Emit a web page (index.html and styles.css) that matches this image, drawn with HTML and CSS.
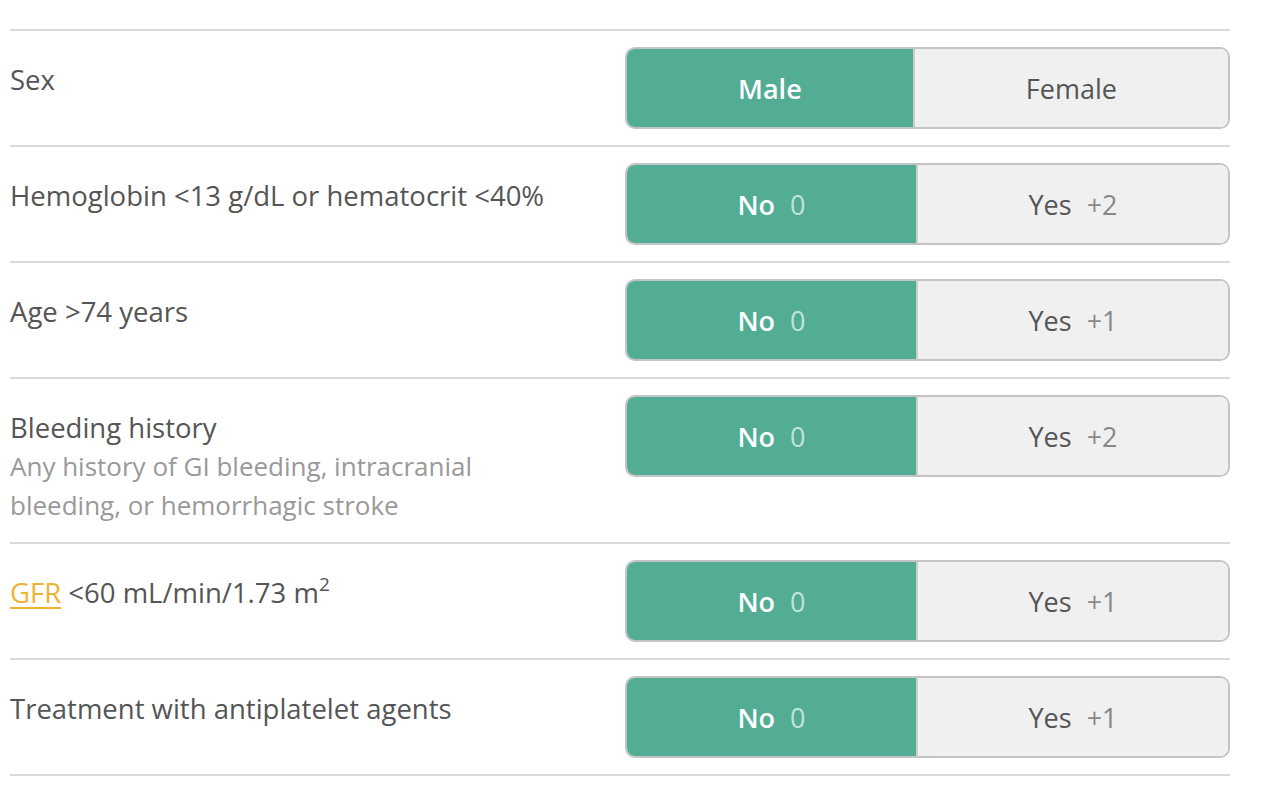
FILE: index.html
```html
<!DOCTYPE html>
<html>
<head>
<meta charset="utf-8">
<link rel="stylesheet" href="styles.css">
</head>
<body>
<div class="calc">
  <div class="row">
    <div class="label"><div class="title">Sex</div></div>
    <div class="toggle">
      <div class="opt active"><span class="name">Male</span></div>
      <div class="opt"><span class="name">Female</span></div>
    </div>
  </div>
  <div class="row">
    <div class="label"><div class="title">Hemoglobin &lt;13 g/dL or hematocrit &lt;40%</div></div>
    <div class="toggle">
      <div class="opt active"><span class="name">No</span><span class="pts">0</span></div>
      <div class="opt"><span class="name">Yes</span><span class="pts">+2</span></div>
    </div>
  </div>
  <div class="row">
    <div class="label"><div class="title">Age &gt;74 years</div></div>
    <div class="toggle">
      <div class="opt active"><span class="name">No</span><span class="pts">0</span></div>
      <div class="opt"><span class="name">Yes</span><span class="pts">+1</span></div>
    </div>
  </div>
  <div class="row">
    <div class="label">
      <div class="title">Bleeding history</div>
      <div class="sub">Any history of GI bleeding, intracranial bleeding, or hemorrhagic stroke</div>
    </div>
    <div class="toggle">
      <div class="opt active"><span class="name">No</span><span class="pts">0</span></div>
      <div class="opt"><span class="name">Yes</span><span class="pts">+2</span></div>
    </div>
  </div>
  <div class="row">
    <div class="label"><div class="title"><a class="link" href="#">GFR</a> &lt;60 mL/min/1.73 m<sup>2</sup></div></div>
    <div class="toggle">
      <div class="opt active"><span class="name">No</span><span class="pts">0</span></div>
      <div class="opt"><span class="name">Yes</span><span class="pts">+1</span></div>
    </div>
  </div>
  <div class="row last">
    <div class="label"><div class="title">Treatment with antiplatelet agents</div></div>
    <div class="toggle">
      <div class="opt active"><span class="name">No</span><span class="pts">0</span></div>
      <div class="opt"><span class="name">Yes</span><span class="pts">+1</span></div>
    </div>
  </div>
</div>
</body>
</html>
```
FILE: styles.css
```css
html, body {
  margin: 0;
  padding: 0;
  background: #ffffff;
}
body {
  font-family: "Open Sans", "Noto Sans", sans-serif;
  color: #555555;
}
.calc {
  margin: 29px 0 0 10px;
  width: 1220px;
}
.row {
  display: flex;
  border-top: 2px solid #d9d9d9;
  padding: 16px 0;
}
.row.last {
  border-bottom: 2px solid #d9d9d9;
}
.label {
  width: 615px;
  flex: none;
  padding-top: 13px;
  padding-bottom: 1px;
  line-height: 39px;
}
.title {
  color: #555555;
  font-size: 27.5px;
}
.sub {
  color: #999999;
  font-size: 26px;
  padding-right: 120px;
}
.link {
  color: #f0b232;
  text-decoration: underline;
  text-underline-offset: 4px;
  text-decoration-thickness: 2px;
}
sup {
  font-size: 19px;
  line-height: 0;
  vertical-align: 0;
  position: relative;
  top: -12px;
}
.toggle {
  flex: 1;
  display: flex;
  height: 78px;
  border: 2px solid #c4c4c4;
  border-radius: 10px;
  overflow: hidden;
  font-size: 27px;
}
.opt {
  flex: 1 1 auto;
  display: flex;
  align-items: center;
  justify-content: center;
  background: #f0f0f0;
  color: #555555;
}
.opt + .opt {
  border-left: 2px solid #cdcdcd;
}
.opt.active {
  background: #52ad94;
  color: #ffffff;
  font-weight: 600;
}
.pts {
  margin-left: 15px;
  color: #888888;
  font-weight: 400;
}
.opt.active .pts {
  color: #c2e4d8;
}
```
